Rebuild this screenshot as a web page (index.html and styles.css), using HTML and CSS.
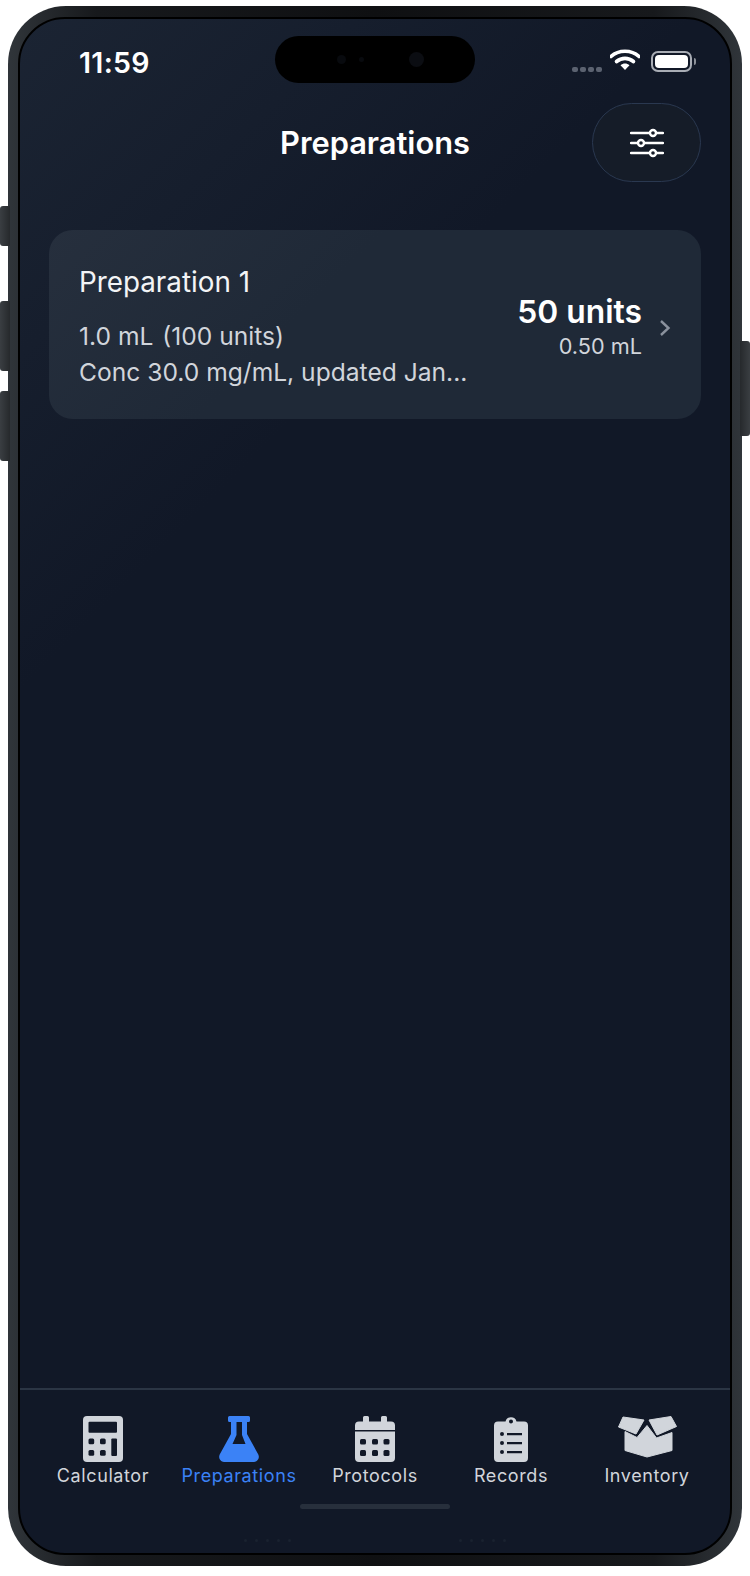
FILE: index.html
```html
<!DOCTYPE html>
<html lang="en">
<head>
    <meta charset="UTF-8">
    <meta name="viewport" content="width=device-width, initial-scale=1.0">
    <title>Preparations</title>
    <link rel="stylesheet" href="styles.css">
</head>
<body>

    <div class="phone">
        <!-- Hardware buttons -->
        <span class="side-btn mute"></span>
        <span class="side-btn vol-up"></span>
        <span class="side-btn vol-down"></span>
        <span class="side-btn power"></span>

        <div class="screen">
            <div class="island">
                <span class="island-dot dot-a"></span>
                <span class="island-dot dot-b"></span>
                <span class="island-cam"></span>
            </div>

            <!-- Status bar -->
            <div class="status-bar">
                <span class="time">11:59</span>
                <div class="status-icons">
                    <div class="signal"><span></span><span></span><span></span><span></span></div>
                    <svg class="wifi" width="30" height="22" viewBox="0 0 30 22">
                        <path d="M1 7.500C8.500 0.500 21.500 0.500 29 7.500" fill="none" stroke="#fff" stroke-width="3.600" stroke-linecap="round"/>
                        <path d="M6.500 12.500C11.500 8.300 18.500 8.300 23.500 12.500" fill="none" stroke="#fff" stroke-width="3.600" stroke-linecap="round"/>
                        <path d="M10.500 16.200C13.200 14 16.800 14 19.500 16.200L15 21Z" fill="#fff"/>
                    </svg>
                    <div class="battery"><span class="battery-fill"></span></div>
                    <span class="battery-nub"></span>
                </div>
            </div>

            <!-- Header -->
            <div class="header">
                <h1 class="title">Preparations</h1>
                <button class="filter-btn">
                    <svg width="34" height="30" viewBox="0 0 34 30">
                        <path d="M1 5H33M1 15H33M1 25H33" stroke="#fff" stroke-width="2.400" stroke-linecap="round"/>
                        <circle cx="23" cy="5" r="3" fill="#151c28" stroke="#fff" stroke-width="2.400"/>
                        <circle cx="11" cy="15" r="3" fill="#151c28" stroke="#fff" stroke-width="2.400"/>
                        <circle cx="23" cy="25" r="3" fill="#151c28" stroke="#fff" stroke-width="2.400"/>
                    </svg>
                </button>
            </div>

            <!-- List -->
            <div class="content">
                <div class="card">
                    <div class="card-info">
                        <div class="card-name">Preparation 1</div>
                        <div class="card-line first">1.0 mL <span class="card-units">(100 units)</span></div>
                        <div class="card-line">Conc 30.0 mg/mL, updated Jan...</div>
                    </div>
                    <div class="card-dose">
                        <div class="dose-units">50 units</div>
                        <div class="dose-ml">0.50 mL</div>
                    </div>
                    <svg class="chevron" width="12" height="18" viewBox="0 0 12 18">
                        <path d="M2 2L9.500 9L2 16" fill="none" stroke="#8a919d" stroke-width="2.400"/>
                    </svg>
                </div>
            </div>

            <!-- Tab bar -->
            <div class="tabbar">
                <div class="tab">
                    <svg class="tab-icon" width="40" height="46" viewBox="0 0 40 46">
                        <rect width="40" height="46" rx="4" fill="currentColor"/>
                        <g class="icon-cut">
                            <rect x="5.500" y="5.700" width="28.500" height="11" rx="1"/>
                            <rect x="5.500" y="22.500" width="5.700" height="5.700" rx="1.500"/>
                            <rect x="17" y="22.500" width="5.700" height="5.700" rx="1.500"/>
                            <rect x="28.300" y="22.500" width="5.700" height="17.500" rx="1"/>
                            <rect x="5.500" y="34" width="5.700" height="5.700" rx="1.500"/>
                            <rect x="17" y="34" width="5.700" height="5.700" rx="1.500"/>
                        </g>
                    </svg>
                    <span>Calculator</span>
                </div>
                <div class="tab active">
                    <svg class="tab-icon" width="40" height="46" viewBox="0 0 40 46">
                        <path fill="currentColor" fill-rule="evenodd" d="M10.500 0H29.500A1.500 1.500 0 0 1 31 1.500V4.500A1.500 1.500 0 0 1 29.500 6H28V18L39.300 38.500C41 42 38.500 46 35 46H5C1.500 46 -1 42 0.700 38.500L12 18V6H10.500A1.500 1.500 0 0 1 9 4.500V1.500A1.500 1.500 0 0 1 10.500 0ZM17.500 6V19L13.500 28H26.500L23 19V6Z"/>
                    </svg>
                    <span>Preparations</span>
                </div>
                <div class="tab">
                    <svg class="tab-icon" width="40" height="46" viewBox="0 0 40 46">
                        <path fill="currentColor" d="M8 1.500A1.500 1.500 0 0 1 9.500 0H12.500A1.500 1.500 0 0 1 14 1.500V5.500H26V1.500A1.500 1.500 0 0 1 27.500 0H30.500A1.500 1.500 0 0 1 32 1.500V5.500H36A4 4 0 0 1 40 9.500V14H0V9.500A4 4 0 0 1 4 5.500H8ZM0 15.500H40V42A4 4 0 0 1 36 46H4A4 4 0 0 1 0 42Z"/>
                        <g class="icon-cut">
                            <rect x="5" y="23" width="6" height="5.500" rx="1.500"/>
                            <rect x="17" y="23" width="6" height="5.500" rx="1.500"/>
                            <rect x="28.500" y="23" width="6" height="5.500" rx="1.500"/>
                            <rect x="5" y="34" width="6" height="6" rx="1.500"/>
                            <rect x="17" y="34" width="6" height="6" rx="1.500"/>
                            <rect x="28.500" y="34" width="6" height="6" rx="1.500"/>
                        </g>
                    </svg>
                    <span>Protocols</span>
                </div>
                <div class="tab">
                    <svg class="tab-icon" width="34" height="46" viewBox="0 0 34 46">
                        <path fill="currentColor" fill-rule="evenodd" d="M11.500 5.500A5.700 5.700 0 0 1 22.500 5.500H30A4 4 0 0 1 34 9.500V42A4 4 0 0 1 30 46H4A4 4 0 0 1 0 42V9.500A4 4 0 0 1 4 5.500ZM17 3.500A2 2 0 1 0 17 7.500A2 2 0 1 0 17 3.500ZM8 16A2 2 0 1 0 8 20A2 2 0 1 0 8 16ZM13 17V19.200H28V17ZM8 25A2 2 0 1 0 8 29A2 2 0 1 0 8 25ZM13 26V28.200H28V26ZM8 34A2 2 0 1 0 8 38A2 2 0 1 0 8 34ZM13 35V37.200H28V35Z"/>
                    </svg>
                    <span>Records</span>
                </div>
                <div class="tab">
                    <svg class="tab-icon" width="59" height="46" viewBox="0 0 59 46">
                        <g fill="currentColor" stroke="currentColor" stroke-width="1" stroke-linejoin="round">
                            <path d="M0.500 11L5 1L26 4L18 18Z"/>
                            <path d="M31 4L53 0.500L58.500 10.500L39 19Z"/>
                            <path d="M7 15.500L19 21.500L29 9.500L38.500 22L54 16.500V34.500L29 41L7 34.500Z"/>
                        </g>
                    </svg>
                    <span>Inventory</span>
                </div>
            </div>

            <div class="home-indicator"></div>
            <div class="bottom-dots">
                <div class="dots"><span></span><span></span><span></span><span></span><span></span></div>
                <div class="dots"><span></span><span></span><span></span><span></span><span></span></div>
            </div>
        </div>
    </div>

</body>
</html>
```

FILE: styles.css
```css
body {
    font-family: Inter, "Noto Sans", sans-serif;
    background-color: #fff;
    margin: 0;
    padding: 6px 8px 10px 8px;
    height: 1560px;
}

.phone {
    position: relative;
    height: 100%;
    padding: 11px 10px 11px 10px;
    box-sizing: border-box;
    border-radius: 58px;
    background: linear-gradient(90deg, #30353a 0%, #17191c 12%, #0f1012 50%, #17191c 88%, #30353a 100%);
}

/* Hardware buttons */
.side-btn {
    position: absolute;
    width: 10px;
    background: linear-gradient(90deg, #3a3e42, #26292c);
    border-radius: 3px 0 0 3px;
}

.mute {
    left: -8px;
    top: 200px;
    height: 40px;
}

.vol-up {
    left: -8px;
    top: 295px;
    height: 70px;
}

.vol-down {
    left: -8px;
    top: 385px;
    height: 70px;
}

.power {
    right: -8px;
    top: 335px;
    height: 95px;
    border-radius: 0 3px 3px 0;
    background: linear-gradient(90deg, #26292c, #3a3e42);
}

.screen {
    position: relative;
    height: 100%;
    box-sizing: border-box;
    display: flex;
    flex-direction: column;
    border: 2px solid #000;
    border-radius: 47px;
    overflow: hidden;
    color: #fff;
    background: linear-gradient(135deg, #1b2433 0%, #111827 30%, #111827 100%);
}

.island {
    position: absolute;
    left: 255px;
    top: 17px;
    width: 200px;
    height: 47px;
    border-radius: 24px;
    background-color: #000;
}

.island-dot {
    position: absolute;
    top: 19px;
    border-radius: 50%;
    background-color: #080a0e;
}

.dot-a {
    left: 62px;
    width: 9px;
    height: 9px;
}

.dot-b {
    left: 84px;
    top: 21px;
    width: 5px;
    height: 5px;
}

.island-cam {
    position: absolute;
    left: 134px;
    top: 16px;
    width: 15px;
    height: 15px;
    border-radius: 50%;
    background-color: #0b0d12;
}

/* Status bar */
.status-bar {
    display: flex;
    justify-content: space-between;
    align-items: center;
    height: 60px;
    padding: 0 34px 0 59px;
    margin-top: 12px;
    flex-shrink: 0;
}

.time {
    font-size: 28.500px;
    font-weight: 600;
    letter-spacing: 0.3px;
    margin-top: 3px;
}

.status-icons {
    display: flex;
    align-items: center;
    margin-top: 1px;
}

.signal {
    display: flex;
    gap: 2px;
    margin: 15px 8px 0 0;
}

.signal span {
    width: 6px;
    height: 5px;
    border-radius: 2px;
    background-color: #5b6270;
}

.wifi {
    margin: -3px 11px 0 0;
}

.battery {
    box-sizing: border-box;
    width: 41px;
    height: 21px;
    padding: 2px;
    border: 2px solid #a9adb5;
    border-radius: 7px;
}

.battery-fill {
    display: block;
    height: 100%;
    border-radius: 4px;
    background-color: #fff;
}

.battery-nub {
    width: 2px;
    height: 7px;
    margin-left: 2px;
    border-radius: 0 2px 2px 0;
    background-color: #8c9098;
}

/* Header */
.header {
    position: relative;
    display: flex;
    justify-content: center;
    align-items: center;
    margin-top: 12px;
    height: 79px;
    flex-shrink: 0;
}

.title {
    margin: 0;
    font-size: 30.800px;
    font-weight: 600;
}

.filter-btn {
    position: absolute;
    right: 29px;
    top: 0;
    width: 109px;
    height: 79px;
    padding: 0;
    display: flex;
    align-items: center;
    justify-content: center;
    border: 1.500px solid #2a3850;
    border-radius: 40px;
    background-color: #151c28;
}

/* List */
.content {
    flex: 1;
    padding: 48px 29px 0 29px;
}

.card {
    display: flex;
    align-items: center;
    height: 189px;
    padding: 0 29px 0 30px;
    box-sizing: border-box;
    border-radius: 24px;
    background: linear-gradient(135deg, #262f3d 0%, #1f2937 40%, #1f2937 100%);
}

.card-info {
    flex: 1;
    margin-top: 6px;
}

.card-name {
    font-size: 27.800px;
    line-height: 33px;
    color: #f3f4f6;
}

.card-line {
    font-size: 24.600px;
    line-height: 36px;
    color: #d1d5db;
}

.card-line.first {
    margin-top: 19px;
}

.card-units {
    margin-left: 2px;
}

.card-dose {
    text-align: right;
    margin: 6px 17px 0 0;
}

.dose-units {
    font-size: 31.800px;
    font-weight: 600;
    line-height: 38px;
}

.dose-ml {
    font-size: 21.700px;
    line-height: 31px;
    color: #d1d5db;
}

.chevron {
    margin: 6px 1px 0 0;
}

/* Tab bar */
.tabbar {
    display: flex;
    padding: 26px 15px 0 15px;
    height: 88px;
    border-top: 2px solid #2b3544;
    flex-shrink: 0;
}

.tab {
    flex: 1;
    display: flex;
    flex-direction: column;
    align-items: center;
    color: #d1d5db;
    font-size: 18px;
    letter-spacing: 0.6px;
    line-height: 22px;
}

.tab.active {
    color: #3b82f6;
}

.tab-icon {
    margin-bottom: 3px;
}

.icon-cut {
    fill: #111827;
}

.home-indicator {
    align-self: center;
    width: 150px;
    height: 5px;
    border-radius: 3px;
    background-color: #272f3c;
    flex-shrink: 0;
}

.bottom-dots {
    display: flex;
    justify-content: center;
    gap: 168px;
    margin-top: 30px;
    height: 14px;
    flex-shrink: 0;
}

.dots {
    display: flex;
    gap: 8px;
    height: 3px;
}

.dots span {
    width: 3px;
    height: 3px;
    border-radius: 50%;
    background-color: #1a2230;
}
```
